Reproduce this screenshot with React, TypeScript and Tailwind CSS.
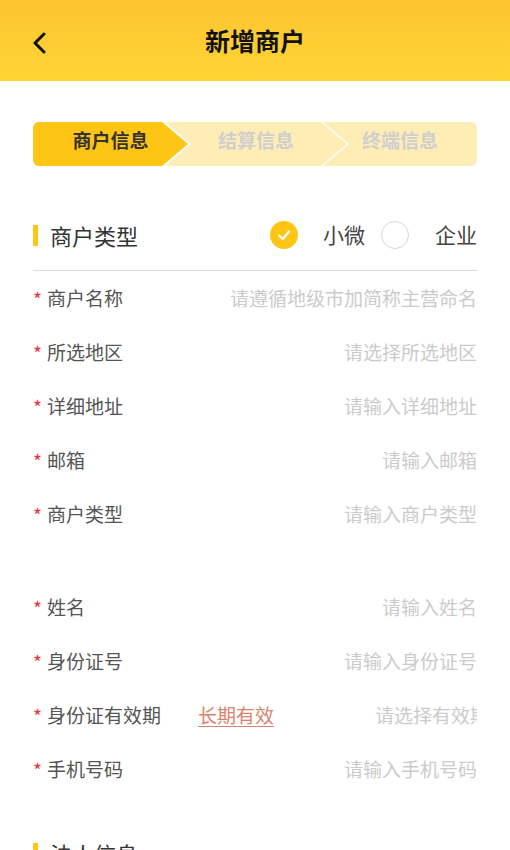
import React from 'react';

type Field = {
  label: string;
  placeholder: string;
  extra?: string;
};

const merchantFields: Field[] = [
  { label: '商户名称', placeholder: '请遵循地级市加简称主营命名' },
  { label: '所选地区', placeholder: '请选择所选地区' },
  { label: '详细地址', placeholder: '请输入详细地址' },
  { label: '邮箱', placeholder: '请输入邮箱' },
  { label: '商户类型', placeholder: '请输入商户类型' },
];

const personFields: Field[] = [
  { label: '姓名', placeholder: '请输入姓名' },
  { label: '身份证号', placeholder: '请输入身份证号' },
  { label: '身份证有效期', placeholder: '请选择有效期', extra: '长期有效' },
  { label: '手机号码', placeholder: '请输入手机号码' },
];

function FormRow({ field }: { field: Field }) {
  return (
    <div className="flex h-[54px] items-center text-[19px]">
      <span className="w-[14px] text-[#e8343f] leading-none">*</span>
      <span className="text-[#555]">{field.label}</span>
      {field.extra ? (
        <>
          <span className="ml-[37px] text-[#d9826d] underline underline-offset-[3px] decoration-[1px]">
            {field.extra}
          </span>
          <span className="ml-auto w-[102px] overflow-hidden whitespace-nowrap text-[#cbcbcb]">
            {field.placeholder}
          </span>
        </>
      ) : (
        <span className="ml-auto text-[#cbcbcb] whitespace-nowrap">{field.placeholder}</span>
      )}
    </div>
  );
}

function SectionTitle({ title, children }: { title: string; children?: React.ReactNode }) {
  return (
    <div className="flex items-center">
      <span className="mr-[12px] h-[21px] w-[5px] bg-[#ffc515]" />
      <span className="text-[22px] text-[#333]">{title}</span>
      {children}
    </div>
  );
}

export default function App() {
  return (
    <div
      className="min-h-[850px] w-[510px] bg-white"
      style={{ fontFamily: '"Noto Sans CJK SC", "Noto Sans", sans-serif' }}
    >
      {/* 顶部导航 */}
      <div className="relative flex h-[81px] items-center justify-center bg-linear-to-b from-[#fdc42f] to-[#ffd535]">
        <button className="absolute left-[30px] top-[30px] p-[2px]">
          <svg width="16" height="22" viewBox="0 0 16 22" fill="none">
            <polyline
              points="12,2 3,11 12,20"
              stroke="#111"
              strokeWidth="3"
              strokeLinecap="round"
              strokeLinejoin="round"
            />
          </svg>
        </button>
        <h1 className="text-[25px] font-bold text-[#111]">新增商户</h1>
      </div>

      <div className="px-[33px]">
        {/* 步骤条 */}
        <div className="mt-[41px] flex h-[44px] overflow-hidden rounded-[6px] bg-white">
          <div className="flex w-[155px] items-center justify-center pb-[8px] bg-[#ffc515] [clip-path:polygon(0_0,calc(100%-26px)_0,100%_50%,calc(100%-26px)_100%,0_100%)]">
            <span className="text-[19px] font-bold text-[#333]">商户信息</span>
          </div>
          <div className="-ml-[23px] flex w-[182px] items-center justify-center pb-[8px] bg-[#ffedb6] [clip-path:polygon(0_0,calc(100%-26px)_0,100%_50%,calc(100%-26px)_100%,0_100%,26px_50%)]">
            <span className="text-[19px] font-bold text-[#cfcfcf]">结算信息</span>
          </div>
          <div className="-ml-[24px] flex flex-1 items-center justify-center pb-[8px] bg-[#ffedb6] [clip-path:polygon(0_0,100%_0,100%_100%,0_100%,26px_50%)]">
            <span className="text-[19px] font-bold text-[#cfcfcf]">终端信息</span>
          </div>
        </div>

        {/* 商户类型 */}
        <div className="mt-[34px] flex h-[71px] items-center border-b border-[#dcdcdc]">
          <div className="flex-1">
            <SectionTitle title="商户类型" />
          </div>
          <div className="flex items-center text-[21px] text-[#444]">
            <span className="flex h-[28px] w-[28px] items-center justify-center rounded-full bg-[#ffc515]">
              <svg width="16" height="16" viewBox="0 0 16 16" fill="none">
                <polyline
                  points="3,8.5 6.8,12 13,4.5"
                  stroke="#fff"
                  strokeWidth="2.2"
                  strokeLinecap="round"
                  strokeLinejoin="round"
                />
              </svg>
            </span>
            <span className="ml-[25px]">小微</span>
            <span className="ml-[16px] h-[28px] w-[28px] rounded-full border-[1.5px] border-[#d6d6d6]" />
            <span className="ml-[26px]">企业</span>
          </div>
        </div>

        {merchantFields.map((f) => (
          <FormRow key={f.label} field={f} />
        ))}

        <div className="h-[39px]" />

        {personFields.map((f) => (
          <FormRow key={f.label} field={f} />
        ))}

        <div className="mt-[23px] flex h-[68px] items-center">
          <SectionTitle title="法人信息" />
        </div>
      </div>
    </div>
  );
}
